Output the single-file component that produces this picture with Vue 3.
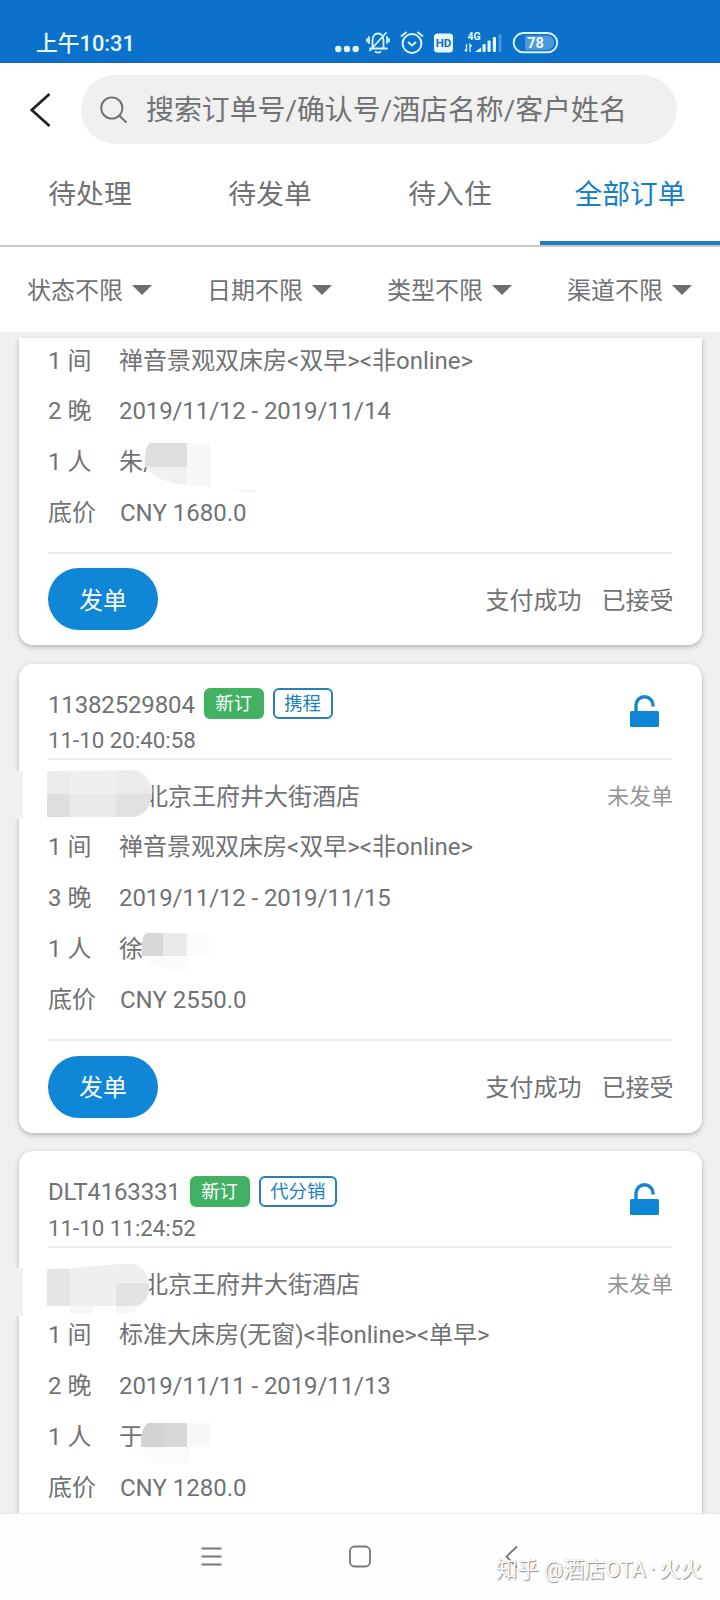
<script setup>
const tabs = ['待处理', '待发单', '待入住', '全部订单']
const filters = ['状态不限', '日期不限', '类型不限', '渠道不限']

const orders = [
  {
    id: 'a',
    room: '禅音景观双床房<双早><非online>',
    nights: '2',
    dates: '2019/11/12 - 2019/11/14',
    guest: '朱',
    price: 'CNY 1680.0',
  },
  {
    id: 'b',
    number: '11382529804',
    source: '携程',
    time: '11-10 20:40:58',
    room: '禅音景观双床房<双早><非online>',
    nights: '3',
    dates: '2019/11/12 - 2019/11/15',
    guest: '徐',
    price: 'CNY 2550.0',
  },
  {
    id: 'c',
    number: 'DLT4163331',
    source: '代分销',
    time: '11-10 11:24:52',
    room: '标准大床房(无窗)<非online><单早>',
    nights: '2',
    dates: '2019/11/11 - 2019/11/13',
    guest: '于',
    price: 'CNY 1280.0',
  },
]
</script>

<template>
  <div class="screen">
    <header class="status">
      <span class="clock">上午10:31</span>
      <svg class="indicators" width="230" height="26" viewBox="330 30 230 26" fill="none" stroke="#d9f3ff">
        <g fill="#e6f8ff" stroke="none">
          <circle cx="338.3" cy="49" r="3.200" /><circle cx="347" cy="49" r="3.200" /><circle cx="355.7" cy="49" r="3.200" />
        </g>
        <g stroke-width="1.800" stroke-linecap="round">
          <path d="M370 48.500h17M372.500 48v-7.500c0-4 2-7 5.500-7s5.500 3 5.500 7v7.500M370 50.500l16-17.500M375.500 51.800q2.500 1.500 5 0M369 37v6M367 39v2.500M387 37v6M389 39v2.500" />
        </g>
        <circle cx="412" cy="43.500" r="9.400" stroke-width="2" />
        <path d="M408 42l4 3.500 4-3.500M401 36.500l5.500-4.500M423 36.500l-5.500-4.500" stroke-width="2" />
        <rect x="434" y="33.500" width="19" height="19" rx="3.500" fill="#e6f8ff" stroke="none" />
        <text x="443.500" y="47.300" class="hd">HD</text>
        <text x="474" y="39.800" class="net">4G</text>
        <path d="M466.500 44v7.500M466.500 51.500l-1.800-2M470 52v-7.500l1.800 2" stroke-width="1.300" />
        <g fill="#e6f8ff" stroke="none">
          <path d="M475 52l6-4.500v4.500z" /><rect x="482.500" y="44" width="3.200" height="8" rx="1" />
          <rect x="487.500" y="40.500" width="3.200" height="11.500" rx="1" /><rect x="492.800" y="37" width="3.200" height="15" rx="1" />
          <rect x="498.500" y="34" width="3" height="18" rx="1" fill="#4795dc" />
        </g>
        <rect x="513.700" y="33" width="43.500" height="19.300" rx="9.600" stroke-width="1.900" />
        <path d="M525 35.500h22a7.200 7.200 0 0 1 0 14.400h-22z" fill="#4b98df" stroke="none" />
        <text x="535.500" y="47.800" class="charge">78</text>
      </svg>
    </header>

    <div class="top">
      <svg class="back" width="22" height="36" viewBox="0 0 22 36" fill="none" stroke="#222" stroke-width="2.700">
        <path d="M19.500 2 1.800 18l17.700 16" />
      </svg>
      <div class="search">
        <svg width="28" height="28" viewBox="0 0 28 28" fill="none" stroke="#6d6f71" stroke-width="1.900">
          <circle cx="11.800" cy="12" r="10.600" /><path d="M19.400 19.700 26.500 26.500" />
        </svg>
        <span>搜索订单号/确认号/酒店名称/客户姓名</span>
      </div>
    </div>

    <nav class="tabs">
      <div v-for="(tab, i) in tabs" :key="tab" class="tab" :class="{ active: i === 3 }">{{ tab }}</div>
    </nav>

    <div class="filters">
      <div v-for="f in filters" :key="f" class="filter"><span>{{ f }}</span><i class="caret"></i></div>
    </div>

    <main class="list">
      <div class="track">
        <article v-for="o in orders" :key="o.id" class="card" :class="{ partial: !o.number }">
          <template v-if="o.number">
            <div class="head">
              <div>
                <div class="title">
                  <span class="number">{{ o.number }}</span>
                  <span class="badge fresh">新订</span>
                  <span class="badge">{{ o.source }}</span>
                </div>
                <div class="time">{{ o.time }}</div>
              </div>
              <svg class="lock" width="29" height="32" viewBox="0 0 29 32">
                <path d="M6 17V10.200a8.500 8.500 0 0 1 17 0v1.300" fill="none" stroke="#1684cf" stroke-width="3.400" />
                <rect y="16" width="29" height="16" rx="1.500" fill="#0f85d6" />
              </svg>
            </div>
            <div class="hotel"><span>北京王府井大街酒店</span><em>未发单</em></div>
          </template>
          <div class="row"><b>1 间</b><span>{{ o.room }}</span></div>
          <div class="row"><b>{{ o.nights }} 晚</b><span class="dates">{{ o.dates }}</span></div>
          <div class="row"><b>1 人</b><span>{{ o.guest }}</span></div>
          <div class="row"><b>底价</b><span class="price">{{ o.price }}</span></div>
          <footer class="foot">
            <button class="send">发单</button>
            <span class="paid">支付成功</span><span class="accepted">已接受</span>
          </footer>

          <!-- privacy mosaic over the guest and hotel names -->
          <svg v-if="o.id === 'a'" class="mosaic guest-a" width="115" height="52" viewBox="143 442 115 52">
            <path d="M145 467l2 0-1.500 5-2 0z" fill="#777" />
            <path d="M145 465q-2-12 4-22h38v24h-41z" fill="#dfdfdf" />
            <path d="M146 467h41v18q-29-2-41-18z" fill="#f1f1f1" />
            <path d="M187 443h24v44l-24-2z" fill="#f8f8f8" /><path d="M231 489l25 1v3q-13 0-25-4z" fill="#f4f4f4" />
          </svg>
          <svg v-if="o.id === 'b'" class="mosaic guest" width="72" height="42" viewBox="140 0 72 42">
            <path d="M142 24q-2-17 4-23h17v23z" fill="#d8d8d8" /><path d="M163 1h24v23h-24z" fill="#eaeaea" />
            <path d="M187 1h22v23h-22z" fill="#fbfbfb" /><path d="M142 24h45v14q-28 2-45-14z" fill="#fafafa" />
          </svg>
          <svg v-if="o.id === 'c'" class="mosaic guest lower" width="72" height="42" viewBox="140 0 72 42">
            <path d="M141 25q-1-18 7-24h15v24z" fill="#d3d3d3" /><path d="M163 1h24v24h-24z" fill="#d7d7d7" />
            <path d="M187 1h23v24h-23z" fill="#f8f8f8" /><path d="M141 25h49v16h-33q-11-4-16-16z" fill="#fbfbfb" />
          </svg>
          <svg v-if="o.id === 'b'" class="mosaic hotel-mask" width="160" height="52" viewBox="0 768 160 52">
            <path d="M0 770h23v48h-23z" fill="#f0f0f0" />
            <path d="M47 770l85-1q14 1 20 15 2 12-5 23-5 9-14 9H47z" fill="#efefef" />
            <path d="M47 771h23v22h-23zM116 770h16q15 1 20 23h-36z" fill="#ebebeb" />
            <path d="M47 793h23v23h-23z" fill="#dedede" /><path d="M70 793h23v23h-23zM93 793h23v23h-23z" fill="#e9e9e9" />
            <path d="M116 793h36q-2 20-19 23h-17z" fill="#e1e1e1" />
          </svg>
          <svg v-if="o.id === 'c'" class="mosaic hotel-mask" width="160" height="60" viewBox="0 1256 160 60">
            <path d="M0 1268h23v48h-23z" fill="#f0f0f0" />
            <path d="M70 1306h23v7h-23zM116 1306h22q-2 7-10 7h-12z" fill="#f6f6f6" />
            <path d="M47 1269l23-1 50-4h12q12 1 17 16 2 20-10 26H47z" fill="#efefef" />
            <path d="M47 1269h23v37h-23z" fill="#e5e5e5" /><path d="M116 1283h33q-1 20-12 23h-21z" fill="#e3e3e3" />
          </svg>
        </article>
      </div>
    </main>

    <footer class="system">
      <svg width="720" height="86" viewBox="0 1514 720 86" fill="none" stroke="#777" stroke-width="1.800">
        <path d="M201.500 1548.500h20M201.500 1556.500h20M201.500 1564.500h20" />
        <rect x="350" y="1546.500" width="20" height="20" rx="4.500" />
        <path d="M517 1546.500 506.500 1556.500 517 1567.500" />
      </svg>
      <span class="watermark">知乎 @酒店OTA<i>·</i>火火</span>
    </footer>
  </div>
</template>

<style>
body { margin: 0; }
</style>

<style scoped>
.screen {
  width: 720px;
  height: 1600px;
  display: flex;
  flex-direction: column;
  overflow: hidden;
  background: #fff;
  color: #707274;
  font-family: Roboto, "Noto Sans CJK SC", sans-serif;
}
.status {
  box-sizing: border-box;
  height: 63px;
  flex: none;
  display: flex;
  align-items: flex-start;
  background: #0b71ca;
  border-bottom: 1px solid #1763a5;
}
.clock {
  width: 294px;
  margin: 30px 0 0 36px;
  line-height: 28px;
  font-size: 21.8px;
  font-weight: 500;
  color: #e6f9ff;
}
.indicators { margin-top: 30px; }
.hd, .net, .charge { stroke: none; text-anchor: middle; font-weight: 700; }
.hd { fill: #1470bd; font-size: 11.5px; }
.net { fill: #e6f8ff; font-size: 10.5px; }
.charge { fill: #f2fbff; font-size: 14.5px; }
.top {
  height: 69px;
  padding: 12px 43px 0 30px;
  display: flex;
  align-items: center;
}
.back { margin-top: 0; }
.search {
  flex: 1;
  height: 69px;
  margin-left: 29px;
  padding-left: 19px;
  box-sizing: border-box;
  display: flex;
  align-items: center;
  border-radius: 35px;
  background: #f0f0f0;
}
.search span { margin: -3px 0 0 18px; font-size: 27.9px; white-space: nowrap; }
.tabs {
  height: 101px;
  display: grid;
  grid-template-columns: repeat(4, 1fr);
  border-bottom: 2px solid #cacaca;
}
.tab {
  box-sizing: border-box;
  height: 101px;
  padding-top: 2px;
  line-height: 97px;
  text-align: center;
  font-size: 27.8px;
  border-bottom: 4px solid transparent;
}
.tab.active { color: #1580c4; border-color: #1b80c5; }
.filters {
  height: 85px;
  display: grid;
  grid-template-columns: repeat(4, 1fr);
}
.filter { display: flex; align-items: center; padding-left: 27px; font-size: 24px; }
.filter span { margin-top: -2px; }
.caret { margin-left: 9px; border: 10px solid transparent; border-top-color: #6d6d6d; border-bottom: 0; }
.list {
  height: 1181px;
  flex: none;
  box-sizing: border-box;
  padding-top: 6px;
  overflow: hidden;
  background: #f0f0f0;
}
.track { display: flex; flex-direction: column; gap: 18.7px; }
.card {
  position: relative;
  width: 683px;
  height: 469px;
  flex: none;
  box-sizing: border-box;
  margin-left: 19px;
  padding: 0 30px 0 29px;
  border-radius: 14px;
  background: #fff;
  box-shadow: 0 2px 5px rgba(0, 0, 0, 0.26);
}
.card.partial { height: 307px; border-radius: 0 0 14px 14px; }
.partial .row:first-child { height: 48px; line-height: 47px; }
.partial .foot { margin-top: 12.5px; }
.head {
  box-sizing: border-box;
  height: 96.5px;
  padding-top: 24px;
  display: flex;
  justify-content: space-between;
  border-bottom: 2px solid #ececec;
}
.title { display: flex; height: 32px; align-items: center; }
.number { font-size: 24px; line-height: 32px; letter-spacing: -0.15px; margin-right: 9px; padding-top: 2px; }
.badge {
  box-sizing: border-box;
  height: 31px;
  padding: 0 9.5px;
  margin-right: 9.2px;
  line-height: 28px;
  font-size: 18.4px;
  color: #1a80c0;
  border: 2px solid #267fb8;
  border-radius: 6px;
}
.badge.fresh { background: #41b164; border-color: #41b164; color: #fff; }
.time { margin-top: 6.5px; font-size: 22.3px; line-height: 28px; }
.lock { margin: 7.5px 13px 0 0; }
.hotel {
  box-sizing: border-box;
  height: 62.3px;
  padding: 6px 0 0 96px;
  display: flex;
  align-items: center;
  justify-content: space-between;
  font-size: 24px;
}
.hotel em { margin: -1px -1px 0 0; font-style: normal; font-size: 22px; color: #969696; }
.row { height: 51px; display: flex; line-height: 51px; font-size: 24px; white-space: nowrap; }
.row b { width: 71px; font-weight: 400; }
.row .price { margin-left: 1px; }
.row .dates { letter-spacing: -0.1px; }
.foot {
  height: 93px;
  margin-top: 12.7px;
  box-sizing: border-box;
  border-top: 2px solid #e9eaeb;
  display: flex;
  align-items: center;
  font-size: 24px;
}
.foot span { margin-top: -2px; }
.send {
  width: 110px;
  height: 62px;
  padding: 0 0 2px;
  border: 0;
  border-radius: 31px;
  background: #1086d7;
  color: #fff;
  font: inherit;
}
.foot .paid { margin-right: 20px; margin-left: auto; }
.foot .accepted { margin-right: -1.5px; }
.mosaic { position: absolute; }
.guest-a { left: 124px; top: 104px; }
.guest { left: 121px; top: 268px; }
.guest.lower { top: 271px; }
.hotel-mask { left: -19px; top: 105px; }
.system {
  position: relative;
  box-sizing: border-box;
  height: 87px;
  flex: none;
  border-top: 1px solid #e8e8e8;
  background: #fefefe;
}
.system svg { display: block; }
.watermark {
  position: absolute;
  right: 18px;
  top: 41px;
  font-size: 21.3px;
  line-height: 30px;
  color: #fff;
  white-space: nowrap;
  text-shadow: 1px 1px 1px #8d8d8d, 0 0 1px #bbb;
}
.watermark i { margin: 0 4px; font-style: normal; }
</style>
